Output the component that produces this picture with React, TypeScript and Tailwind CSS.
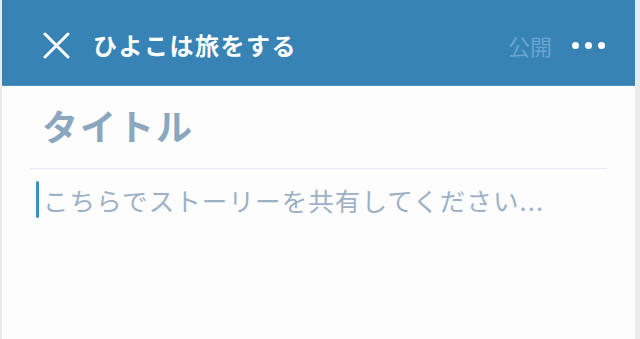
import React from "react";

export default function App() {
  const jp = { fontFamily: '"Noto Sans CJK JP", "Noto Sans", sans-serif' };
  return (
    <div className="flex h-[339px] w-[640px] overflow-hidden bg-[#ebebeb]" style={jp}>
      <div className="ml-[2px] flex w-[633px] flex-col bg-[#fdfdfd]">
        <header className="flex h-[86px] shrink-0 items-center border-b border-[#4a90c2] bg-[#3783b6] pl-[41px] pr-[30px] pt-[5px]">
          <svg width="27" height="27" viewBox="0 0 27 27" className="shrink-0">
            <path d="M2 2 L25 25 M25 2 L2 25" stroke="white" strokeWidth="3" strokeLinecap="round" />
          </svg>
          <div className="ml-[23px] text-[24px] font-bold leading-none tracking-[1.5px] text-white">ひよこは旅をする</div>
          <div className="ml-auto text-[22px] leading-none text-[#6aa4cf]">公開</div>
          <div className="ml-[20px] flex items-center gap-[6px]">
            <span className="h-[7px] w-[7px] rounded-full bg-white" />
            <span className="h-[7px] w-[7px] rounded-full bg-white" />
            <span className="h-[7px] w-[7px] rounded-full bg-white" />
          </div>
        </header>
        <div className="mx-[28px] flex flex-col">
          <div className="h-[83px] border-b border-[#e3eaf1] pl-[12px] pt-[15px] text-[36px] font-bold leading-[48px] tracking-[2px] text-[#8aa7bf]">
            タイトル
          </div>
          <div className="mt-[12px] flex items-center">
            <div className="ml-[6px] h-[37px] w-[3px] rounded-full bg-[#3a8fc4]" />
            <div className="ml-[4px] text-[25.5px] leading-none tracking-[1.1px] text-[#9cb1c5]">こちらでストーリーを共有してください...</div>
          </div>
        </div>
      </div>
    </div>
  );
}
